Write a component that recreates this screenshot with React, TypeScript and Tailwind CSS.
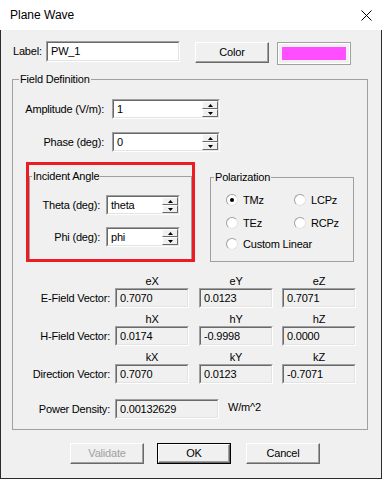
import React from 'react';

function Sunken({ className = '', bg = 'bg-white', children }: { className?: string; bg?: string; children?: React.ReactNode }) {
  return (
    <div className={`border border-t-[#a0a0a0] border-l-[#a0a0a0] border-b-white border-r-white ${className}`}>
      <div className={`h-full w-full flex items-center border border-t-[#696969] border-l-[#696969] border-b-[#e3e3e3] border-r-[#e3e3e3] ${bg}`}>
        {children}
      </div>
    </div>
  );
}

function Arrow({ up }: { up?: boolean }) {
  return (
    <svg width="5" height="3" viewBox="0 0 5 3">
      <polygon points={up ? '0,3 2.5,0 5,3' : '0,0 5,0 2.5,3'} fill="#000" />
    </svg>
  );
}

function SpinField({ value, className = '' }: { value: string; className?: string }) {
  return (
    <Sunken className={`h-[20px] ${className}`}>
      <span className="flex-1 pl-[3px]">{value}</span>
      <div className="flex flex-col w-[16px] h-full">
        <div className="h-[8px] flex items-center justify-center bg-[#f0f0f0] border border-t-white border-l-white border-b-[#696969] border-r-[#696969]">
          <Arrow up />
        </div>
        <div className="h-[8px] flex items-center justify-center bg-[#f0f0f0] border border-t-white border-l-white border-b-[#696969] border-r-[#696969]">
          <Arrow />
        </div>
      </div>
    </Sunken>
  );
}

function Button({ children, className = '', isDefault = false, disabled = false }: { children: React.ReactNode; className?: string; isDefault?: boolean; disabled?: boolean }) {
  return (
    <div className={`w-[74px] h-[21px] ${isDefault ? 'border border-black' : ''} ${className}`}>
      <div
        className={`h-full w-full flex items-center justify-center bg-[#f0f0f0] border border-t-white border-l-white border-b-[#696969] border-r-[#696969] shadow-[inset_-1px_-1px_0_#a0a0a0] ${
          disabled ? 'text-[#a0a0a0]' : 'text-black'
        }`}
      >
        {children}
      </div>
    </div>
  );
}

function Radio({ label, checked = false }: { label: string; checked?: boolean }) {
  return (
    <div className="flex items-center h-[16px]">
      <span className="w-[12px] h-[12px] rounded-full bg-white border border-t-[#a0a0a0] border-l-[#a0a0a0] border-b-[#e3e3e3] border-r-[#e3e3e3] flex items-center justify-center">
        {checked && <span className="w-[4px] h-[4px] rounded-full bg-black" />}
      </span>
      <span className="ml-[5px]">{label}</span>
    </div>
  );
}

const vectors = [
  { label: 'E-Field Vector:', heads: ['eX', 'eY', 'eZ'], values: ['0.7070', '0.0123', '0.7071'] },
  { label: 'H-Field Vector:', heads: ['hX', 'hY', 'hZ'], values: ['0.0174', '-0.9998', '0.0000'] },
  { label: 'Direction Vector:', heads: ['kX', 'kY', 'kZ'], values: ['0.7070', '0.0123', '-0.7071'] },
];

export default function App() {
  return (
    <div className="w-[382px] h-[479px] font-['Liberation_Sans',Arial,sans-serif] text-[11px] tracking-[-0.2px] text-black leading-[13px]">
      {/* title bar */}
      <div className="h-[30px] bg-white flex items-center justify-between pl-[10px] pr-[10px]">
        <span className="text-[12px] tracking-normal">Plane Wave</span>
        <svg width="11" height="11" viewBox="0 0 11 11">
          <path d="M0.5 0.5L10.5 10.5M10.5 0.5L0.5 10.5" stroke="#000" strokeWidth="1" />
        </svg>
      </div>

      <div className="h-[449px] bg-[#f0f0f0] shadow-[inset_1px_0_0_#2b2b2b,inset_-1px_0_0_#2b2b2b,inset_0_-1px_0_#2b2b2b] flex flex-col">
        <div className="flex items-start pl-[13px] mt-[11px]">
          <span className="w-[33px] h-[21px] flex items-center">Label:</span>
          <Sunken className="w-[134px] h-[21px]">
            <span className="pl-[3px]">PW_1</span>
          </Sunken>
          <Button className="ml-[15px] mt-[1px]">Color</Button>
          <div className="ml-[8px] mt-[1px] w-[74px] h-[23px] border border-[#a0a0a0]">
            <div className="h-full w-full border border-white px-[3px] py-[3px]">
              <div className="h-full w-full bg-[#ff4dff]" />
            </div>
          </div>
        </div>

        <fieldset className="ml-[12px] mt-[8px] w-[356px] border border-[#a0a0a0] pb-[10px]">
          <legend className="ml-[6px] px-[1px] leading-[13px]">Field Definition</legend>

          <div className="flex items-center mt-[13px] h-[20px]">
            <span className="w-[91px] text-right">Amplitude (V/m):</span>
            <SpinField value="1" className="ml-[8px] w-[108px]" />
          </div>
          <div className="flex items-center mt-[13px] h-[20px]">
            <span className="w-[91px] text-right">Phase (deg):</span>
            <SpinField value="0" className="ml-[8px] w-[108px]" />
          </div>

          <div className="flex items-start mt-[10px]">
            <div className="ml-[13px] w-[169px] h-[100px] border-[3px] border-[#ec1c24]">
              <fieldset className="mt-[5px] h-[89px] border border-b-0 border-[#a0a0a0]">
                <legend className="ml-[2px] px-[1px] leading-[13px]">Incident Angle</legend>
                <div className="flex items-center mt-[12px] h-[20px]">
                  <span className="w-[70px] text-right">Theta (deg):</span>
                  <SpinField value="theta" className="ml-[6px] w-[74px]" />
                </div>
                <div className="flex items-center mt-[12px] h-[20px]">
                  <span className="w-[70px] text-right">Phi (deg):</span>
                  <SpinField value="phi" className="ml-[6px] w-[74px]" />
                </div>
              </fieldset>
            </div>

            <fieldset className="ml-[15px] mt-[9px] w-[144px] h-[91px] border border-[#a0a0a0] pl-[15px]">
              <legend className="ml-[-12px] px-[1px] leading-[13px]">Polarization</legend>
              <div className="grid grid-cols-[68px_1fr] mt-[8px]">
                <Radio label="TMz" checked />
                <Radio label="LCPz" />
              </div>
              <div className="grid grid-cols-[68px_1fr] mt-[7px]">
                <Radio label="TEz" />
                <Radio label="RCPz" />
              </div>
              <div className="mt-[5px]">
                <Radio label="Custom Linear" />
              </div>
            </fieldset>
          </div>

          <div className="flex flex-col mt-[12px] gap-[4px]">
            {vectors.map(v => (
              <div key={v.label} className="flex flex-col">
                <div className="flex h-[14px] items-center">
                  <span className="w-[102px]" />
                  <span className="w-[74px] text-center">{v.heads[0]}</span>
                  <span className="w-[74px] ml-[10px] text-center">{v.heads[1]}</span>
                  <span className="w-[74px] ml-[9px] text-center">{v.heads[2]}</span>
                </div>
                <div className="flex items-center h-[20px]">
                  <span className="w-[97px] text-right">{v.label}</span>
                  <Sunken className="ml-[5px] w-[74px] h-[20px]" bg="bg-[#f0f0f0]">
                    <span className="pl-[3px]">{v.values[0]}</span>
                  </Sunken>
                  <Sunken className="ml-[10px] w-[74px] h-[20px]" bg="bg-[#f0f0f0]">
                    <span className="pl-[3px]">{v.values[1]}</span>
                  </Sunken>
                  <Sunken className="ml-[9px] w-[74px] h-[20px]" bg="bg-[#f0f0f0]">
                    <span className="pl-[3px]">{v.values[2]}</span>
                  </Sunken>
                </div>
              </div>
            ))}
          </div>

          <div className="flex items-start mt-[15px]">
            <span className="w-[97px] h-[20px] flex items-center justify-end">Power Density:</span>
            <Sunken className="ml-[5px] w-[104px] h-[20px]" bg="bg-[#f0f0f0]">
              <span className="pl-[3px]">0.00132629</span>
            </Sunken>
            <span className="ml-[9px] mt-[2px]">W/m^2</span>
          </div>
        </fieldset>

        <div className="flex mt-[13px] pl-[70px]">
          <Button disabled>Validate</Button>
          <Button isDefault className="ml-[13px]">OK</Button>
          <Button className="ml-[15px]">Cancel</Button>
        </div>
      </div>
    </div>
  );
}
